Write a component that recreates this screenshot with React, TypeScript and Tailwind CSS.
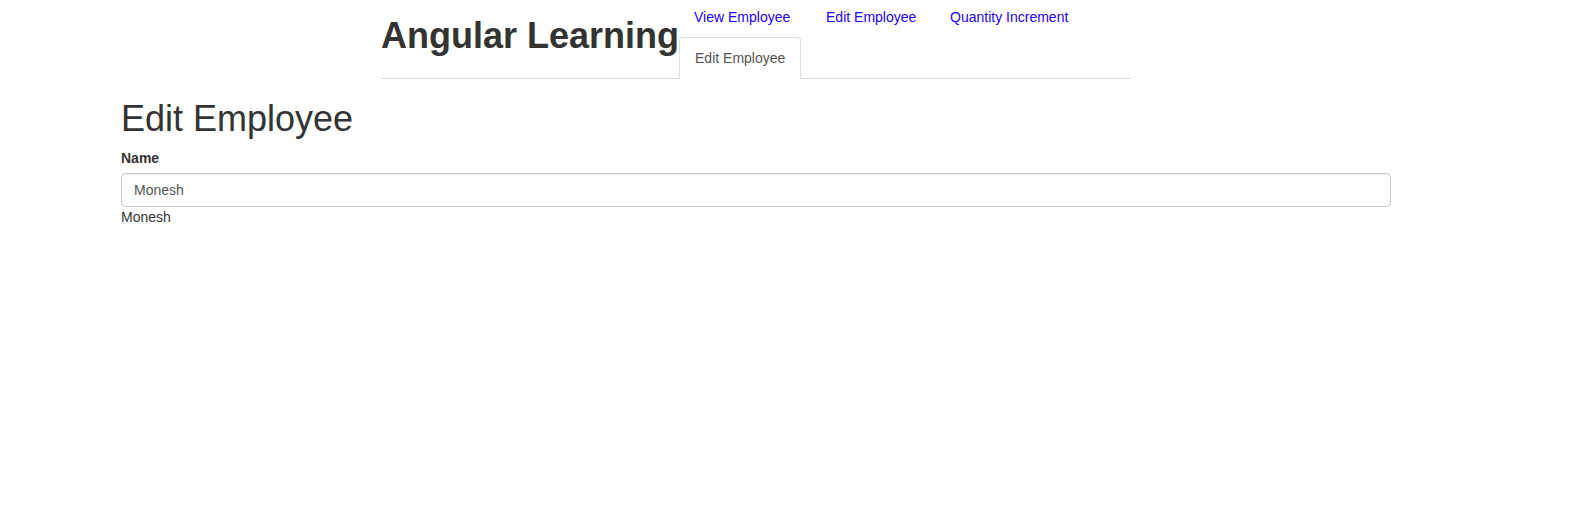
import { useState } from "react";

const links = [
  { label: "View Employee", width: "w-[132px]" },
  { label: "Edit Employee", width: "w-[124px]" },
  { label: "Quantity Increment", width: "w-auto" },
];

export default function App() {
  const [name, setName] = useState("Monesh");

  return (
    <div className="min-h-[507px] bg-white font-['Liberation_Sans',Arial,sans-serif] text-sm leading-5 text-[#333]">
      <div className="ml-[381px] w-[750px]">
        <div className="flex items-start border-b border-[#ddd]">
          <h1 className="mt-[16px] text-[36px] font-bold leading-[1.1] text-[#333]">
            Angular Learning
          </h1>
          <div className="flex flex-col">
            <div className="mt-[7px] flex">
              {links.map((link) => (
                <a
                  key={link.label}
                  href="#"
                  className={`block pl-[15px] text-[#1f00f0] ${link.width}`}
                >
                  {link.label}
                </a>
              ))}
            </div>
            <div className="mt-[10px] -mb-px self-start rounded-t-[4px] border border-[#ddd] border-b-white bg-white px-[15px] py-[10px] text-[#555]">
              Edit Employee
            </div>
          </div>
        </div>
      </div>

      <div className="ml-[121px] w-[1270px]">
        <h1 className="mt-[20px] mb-[9px] text-[36px] font-normal leading-[1.1] text-[#333]">
          Edit Employee
        </h1>
        <label className="mb-[5px] block font-bold">Name</label>
        <input
          value={name}
          onChange={(e) => setName(e.target.value)}
          className="block h-[34px] w-full rounded-[4px] border border-[#ccc] px-[12px] py-[6px] text-[#555] shadow-[inset_0_1px_1px_rgba(0,0,0,0.075)] outline-none"
        />
        <div>{name}</div>
      </div>
    </div>
  );
}
